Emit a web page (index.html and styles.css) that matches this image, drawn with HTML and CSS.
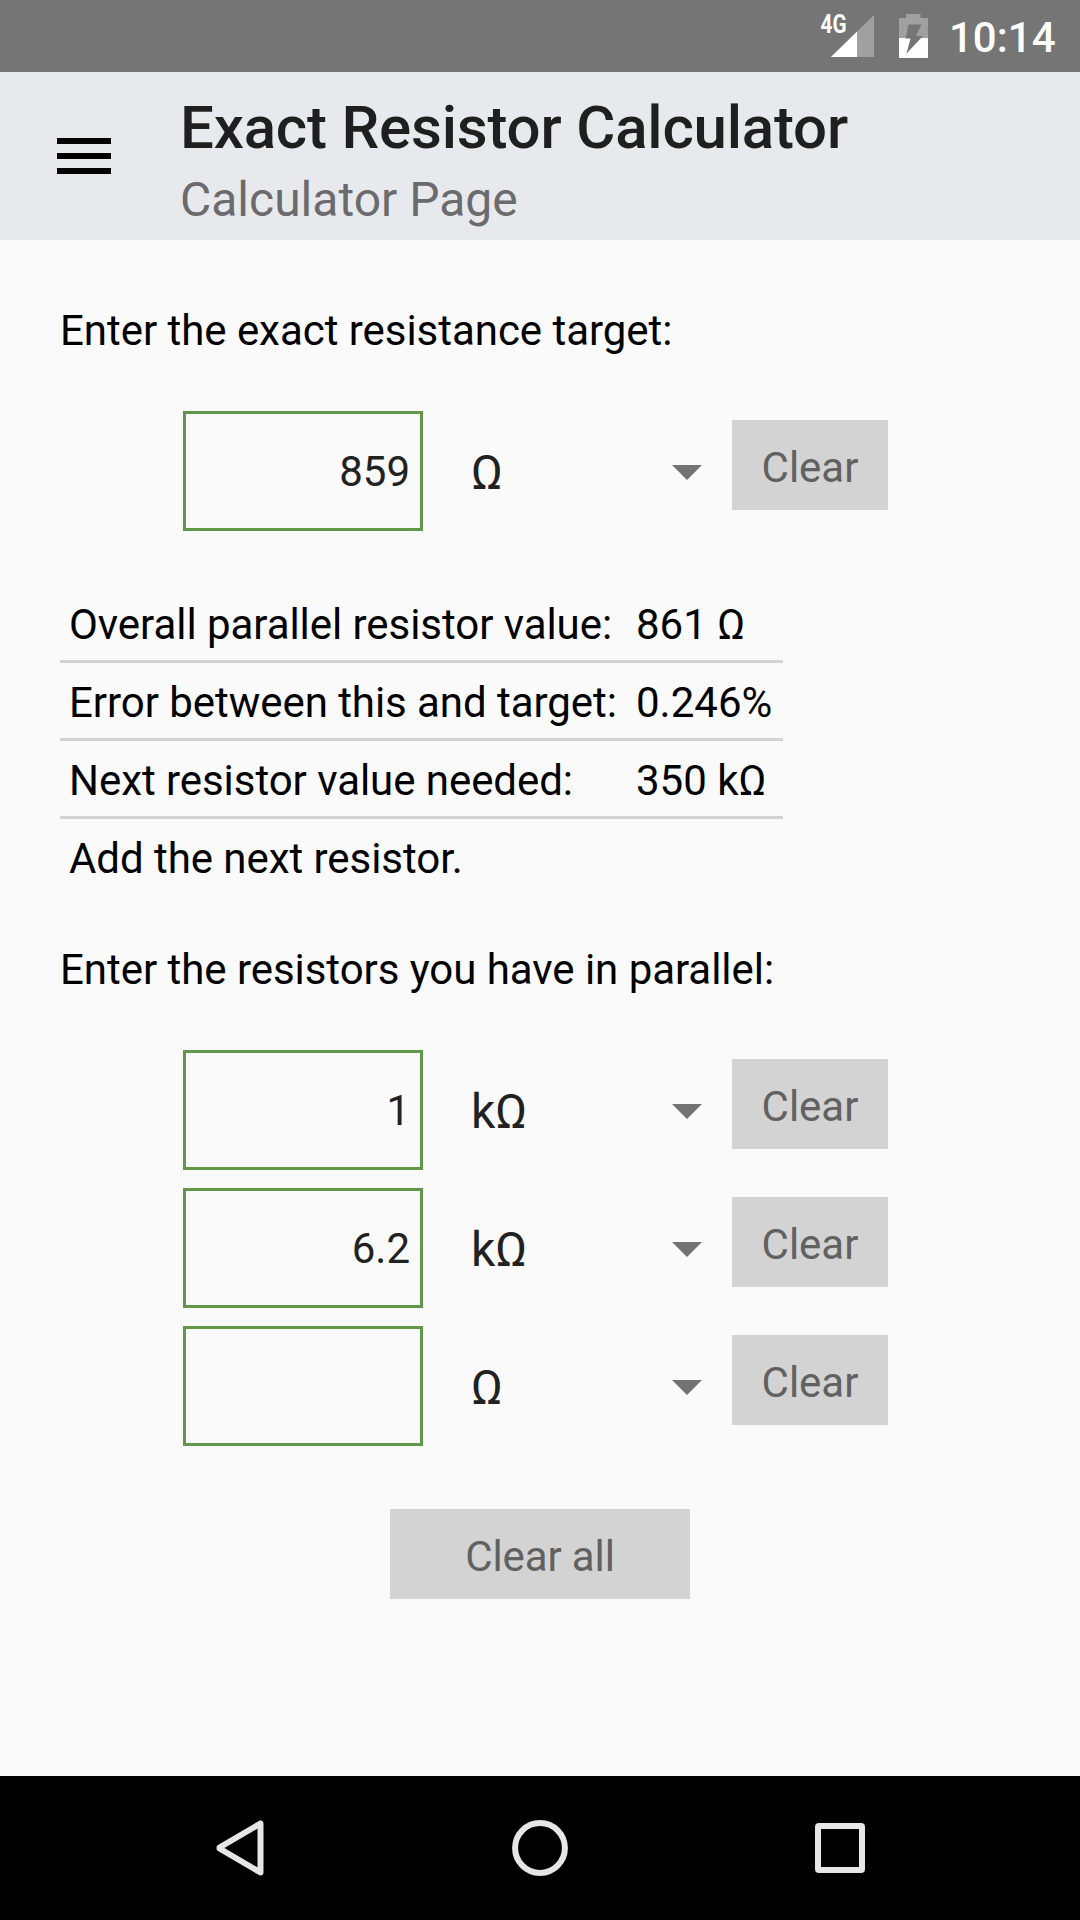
FILE: index.html
```html
<!DOCTYPE html>
<html lang="en">
<head>
<meta charset="utf-8">
<title>Exact Resistor Calculator</title>
<link rel="stylesheet" href="styles.css">
</head>
<body>
<div class="status-bar">
  <svg class="signal" width="58" height="44" viewBox="-4 0 58 44">
    <path d="M54 1V43H11z" fill="#a0a0a0"/>
    <path d="M37 17.6V43H11z" fill="#fff"/>
    <text class="network" x="0.5" y="19.3" textLength="26" lengthAdjust="spacingAndGlyphs">4G</text>
  </svg>
  <svg class="battery" width="29" height="44" viewBox="0 0 29 44">
    <path d="M7 0H21.500V4H29V44H0V4H7z" fill="#a0a0a0"/>
    <path d="M0 24H29V44H0z" fill="#fff"/>
    <path d="M9.500 10.500H22.500L17 22H24L7.500 39.500L11.500 24.500H6.500z" fill="#757575"/>
  </svg>
  <span class="clock">10:14</span>
</div>
<header class="app-bar">
  <svg class="menu" width="54" height="36" viewBox="0 0 54 36"><path d="M0 0H54V6H0zM0 15H54V21H0zM0 30H54V36H0z"/></svg>
  <div class="titles">
    <h1 class="title">Exact Resistor Calculator</h1>
    <div class="subtitle">Calculator Page</div>
  </div>
</header>
<main class="page">
  <p class="prompt">Enter the exact resistance target:</p>
  <div class="rows">
    <div class="row">
      <input class="value" value="859">
      <div class="unit"><span>Ω</span><svg width="30" height="15" viewBox="0 0 30 15"><path d="M0 0H30L15 15z"/></svg></div>
      <button class="btn">Clear</button>
    </div>
  </div>
  <div class="results">
    <div class="result"><span class="label">Overall parallel resistor value:</span><span>861 Ω</span></div>
    <div class="result"><span class="label">Error between this and target:</span><span>0.246%</span></div>
    <div class="result"><span class="label">Next resistor value needed:</span><span>350 kΩ</span></div>
    <div class="result"><span class="label">Add the next resistor.</span></div>
  </div>
  <p class="prompt">Enter the resistors you have in parallel:</p>
  <div class="rows">
    <div class="row">
      <input class="value" value="1">
      <div class="unit"><span>kΩ</span><svg width="30" height="15" viewBox="0 0 30 15"><path d="M0 0H30L15 15z"/></svg></div>
      <button class="btn">Clear</button>
    </div>
    <div class="row">
      <input class="value" value="6.2">
      <div class="unit"><span>kΩ</span><svg width="30" height="15" viewBox="0 0 30 15"><path d="M0 0H30L15 15z"/></svg></div>
      <button class="btn">Clear</button>
    </div>
    <div class="row">
      <input class="value" value="">
      <div class="unit"><span>Ω</span><svg width="30" height="15" viewBox="0 0 30 15"><path d="M0 0H30L15 15z"/></svg></div>
      <button class="btn">Clear</button>
    </div>
  </div>
  <button class="btn btn-all">Clear all</button>
</main>
<nav class="nav-bar">
  <svg width="60" height="60" viewBox="0 0 60 60"><path d="M50.500 5.500V54.500L9.500 30.500V29.500z"/></svg>
  <svg width="60" height="60" viewBox="0 0 60 60"><circle cx="30" cy="30" r="24.900"/></svg>
  <svg width="60" height="60" viewBox="0 0 60 60"><rect x="8" y="8" width="44" height="44" rx="1"/></svg>
</nav>
</body>
</html>
```
FILE: styles.css
```css
* { box-sizing: border-box; }

body {
  margin: 0;
  width: 1080px;
  height: 1920px;
  display: flex;
  flex-direction: column;
  overflow: hidden;
  background: #fafafa;
  color: #000;
  font: 42px/60px Roboto, sans-serif;
}

svg { display: block; flex: none; }

.status-bar {
  height: 72px;
  padding: 14px 24px 0 0;
  display: flex;
  justify-content: flex-end;
  background: #757575;
  color: #fff;
}
.signal { overflow: visible; }
.network { font: 700 26px Roboto, sans-serif; fill: #fff; }
.battery { margin-left: 25px; }
.clock { width: 107px; margin-left: 21px; line-height: 48px; font-weight: 500; white-space: nowrap; }

.app-bar {
  height: 168px;
  padding-left: 57px;
  display: flex;
  align-items: flex-start;
  gap: 69px;
  background: #e8e9ed;
}
.menu { margin-top: 66px; }
.titles { padding-top: 20px; }
.title { margin: 0; font-size: 60px; line-height: 72px; font-weight: 500; letter-spacing: -0.19px; color: #1f1f1f; }
.subtitle { font-size: 48px; line-height: 72px; color: #6b6b6d; }

.page {
  flex: 1;
  padding: 61px 60px 0;
  display: flex;
  flex-direction: column;
}
.prompt { margin: 0 0 50px; letter-spacing: -0.04px; }

.rows { display: flex; flex-direction: column; gap: 18px; padding-left: 123px; }
.row { display: flex; height: 120px; }
.value {
  width: 240px;
  height: 120px;
  padding: 0 10px 0 9px;
  border: 3px solid #629749;
  border-radius: 0;
  background: transparent;
  color: #212121;
  font: inherit;
  text-align: right;
  outline: none;
}
.unit {
  width: 231px;
  margin: 0 30px 0 48px;
  height: 120px;
  padding-top: 2px;
  display: flex;
  align-items: flex-start;
  justify-content: space-between;
  color: #212121;
  font-size: 48px;
  line-height: 120px;
}
.unit svg { margin-top: 52px; fill: #737373; }

.btn {
  width: 156px;
  height: 90px;
  margin: 9px 0 0;
  padding: 5px 0 0;
  border: 0;
  background: #d3d3d3;
  color: #616161;
  font: inherit;
}
.btn-all { width: 300px; margin-top: 63px; align-self: center; letter-spacing: -0.1px; }

.results { width: 723px; margin: 54px 0 43px; }
.result {
  height: 78px;
  padding: 4px 0 0 9px;
  display: flex;
  line-height: 71px;
  border-bottom: 3px solid #d3d3d3;
}
.result:last-child { border-bottom: 0; }
.label { width: 567px; letter-spacing: -0.05px; }

.nav-bar {
  height: 144px;
  padding: 0 210px;
  display: flex;
  align-items: center;
  justify-content: space-between;
  background: #000;
}
.nav-bar svg { fill: none; stroke: #e6e6e6; stroke-width: 6; stroke-linejoin: round; }
```
